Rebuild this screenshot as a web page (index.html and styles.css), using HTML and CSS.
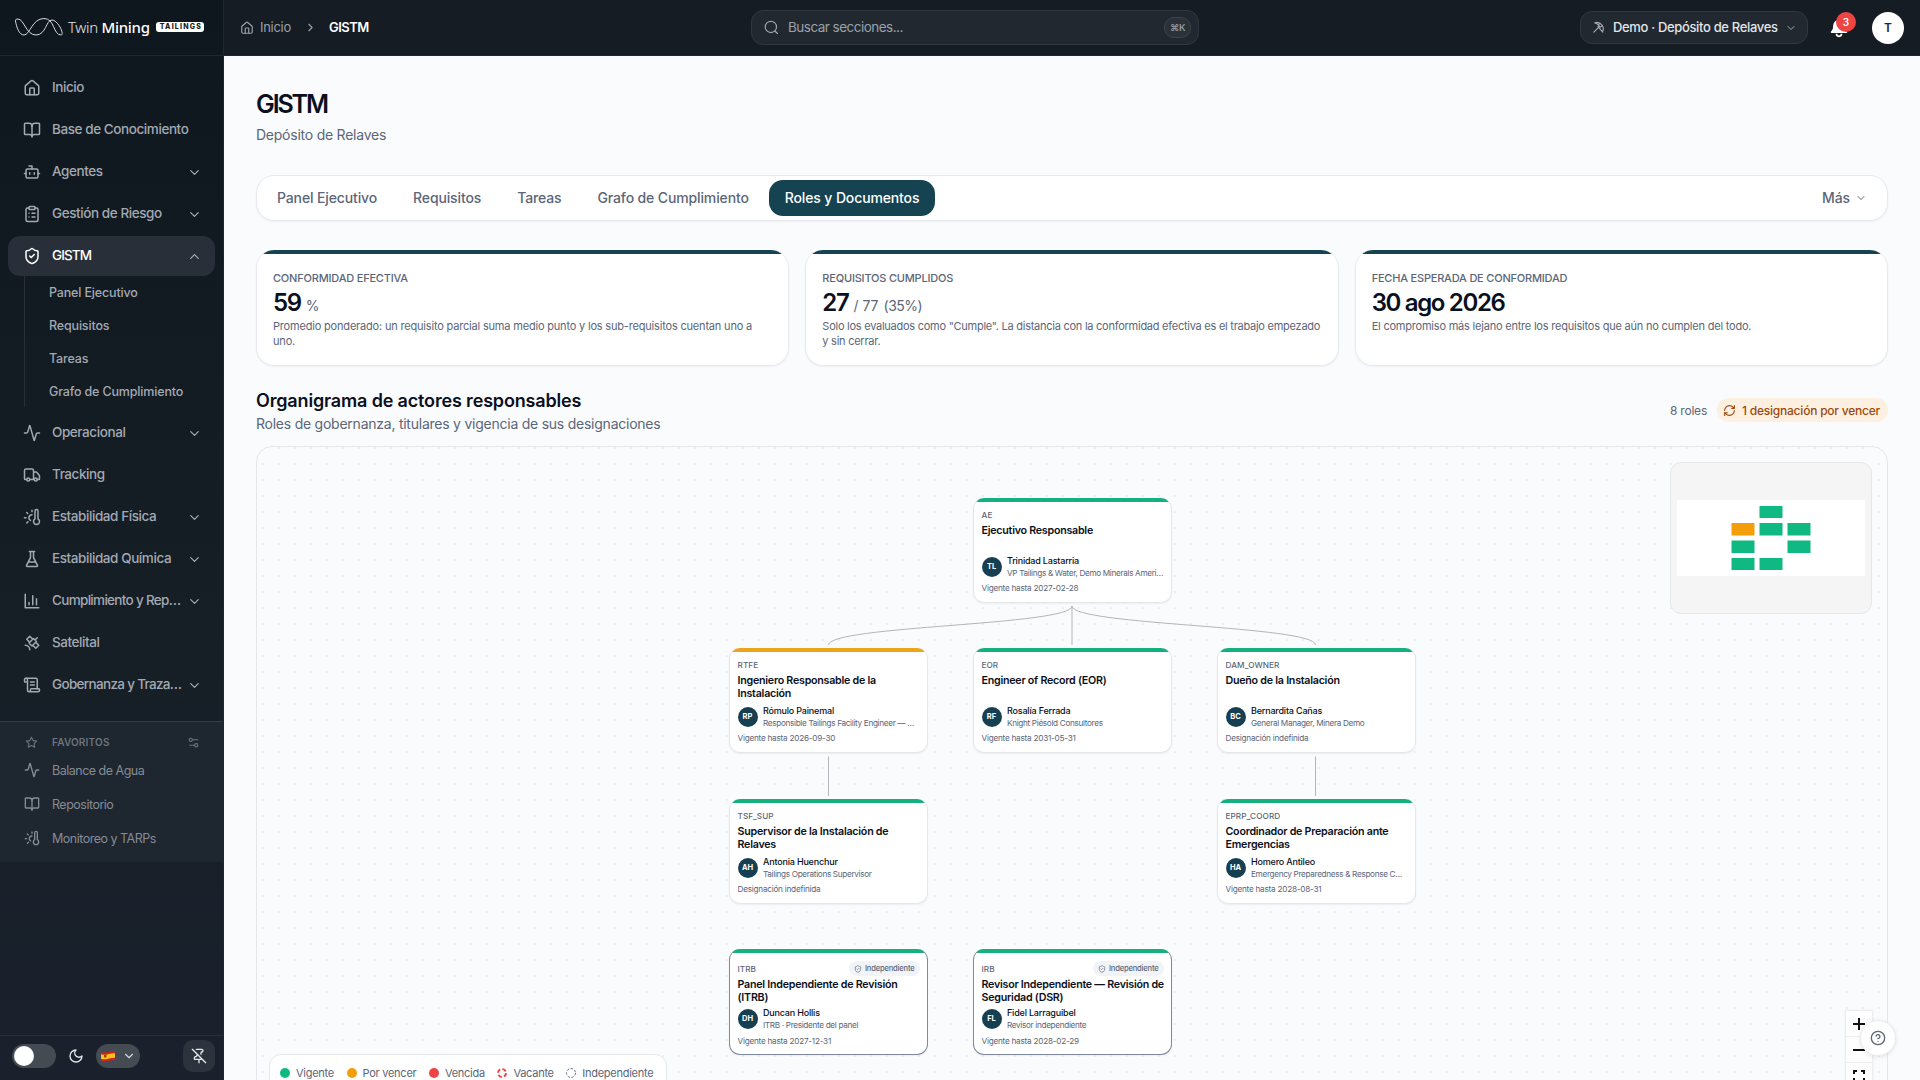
FILE: index.html
```html
<!DOCTYPE html>
<html lang="es">
<head>
<meta charset="utf-8">
<title>GISTM · Twin Mining Tailings</title>
<link rel="stylesheet" href="styles.css">
</head>
<body>
<svg class="sprite" aria-hidden="true">
  <symbol id="house" viewBox="0 0 24 24"><path d="M15 21v-8a1 1 0 0 0-1-1h-4a1 1 0 0 0-1 1v8"/><path d="M3 10a2 2 0 0 1 .709-1.528l7-5.999a2 2 0 0 1 2.582 0l7 5.999A2 2 0 0 1 21 10v9a2 2 0 0 1-2 2H5a2 2 0 0 1-2-2z"/></symbol>
  <symbol id="book" viewBox="0 0 24 24"><path d="M12 7v14"/><path d="M3 18a1 1 0 0 1-1-1V4a1 1 0 0 1 1-1h5a4 4 0 0 1 4 4 4 4 0 0 1 4-4h5a1 1 0 0 1 1 1v13a1 1 0 0 1-1 1h-6a3 3 0 0 0-3 3 3 3 0 0 0-3-3z"/></symbol>
  <symbol id="bot" viewBox="0 0 24 24"><path d="M12 8V4H8"/><rect width="16" height="12" x="4" y="8" rx="2"/><path d="M2 14h2M20 14h2M15 13v2M9 13v2"/></symbol>
  <symbol id="clipboard" viewBox="0 0 24 24"><rect width="8" height="4" x="8" y="2" rx="1"/><path d="M16 4h2a2 2 0 0 1 2 2v14a2 2 0 0 1-2 2H6a2 2 0 0 1-2-2V6a2 2 0 0 1 2-2h2M12 11h4M12 16h4M8 11h.01M8 16h.01"/></symbol>
  <symbol id="shield" viewBox="0 0 24 24"><path d="M20 13c0 5-3.500 7.500-7.660 8.950a1 1 0 0 1-.67-.01C7.500 20.500 4 18 4 13V6a1 1 0 0 1 1-1c2 0 4.500-1.200 6.240-2.720a1.170 1.170 0 0 1 1.520 0C14.510 3.810 17 5 19 5a1 1 0 0 1 1 1z"/><path d="m9 12 2 2 4-4"/></symbol>
  <symbol id="activity" viewBox="0 0 24 24"><path d="M22 12h-2.480a2 2 0 0 0-1.930 1.460l-2.350 8.360a.25.25 0 0 1-.48 0L9.240 2.180a.25.25 0 0 0-.48 0l-2.350 8.360A2 2 0 0 1 4.490 12H2"/></symbol>
  <symbol id="truck" viewBox="0 0 24 24"><path d="M14 18V6a2 2 0 0 0-2-2H4a2 2 0 0 0-2 2v11a1 1 0 0 0 1 1h2M15 18H9M19 18h2a1 1 0 0 0 1-1v-3.650a1 1 0 0 0-.22-.624l-3.480-4.350A1 1 0 0 0 17.520 8H14"/><circle cx="17" cy="18" r="2"/><circle cx="7" cy="18" r="2"/></symbol>
  <symbol id="thermo" viewBox="0 0 24 24"><path d="M12 9a4 4 0 0 0-2 7.500M12 3v2M6.600 18.400l-1.400 1.400M20 4v10.540a4 4 0 1 1-4 0V4a2 2 0 0 1 4 0ZM4 13H2M6.340 7.340 4.930 5.930"/></symbol>
  <symbol id="flask" viewBox="0 0 24 24"><path d="M10 2v7.527a2 2 0 0 1-.211.896L4.720 20.550a1 1 0 0 0 .9 1.450h12.760a1 1 0 0 0 .9-1.450l-5.069-10.127A2 2 0 0 1 14 9.527V2M8.500 2h7M7 16h10"/></symbol>
  <symbol id="chart" viewBox="0 0 24 24"><path d="M3 3v18h18M18 17V9M13 17V5M8 17v-3"/></symbol>
  <symbol id="satellite" viewBox="0 0 24 24"><path d="M13 7 9 3 5 7l4 4M17 11l4 4-4 4-4-4M8 12l4 4 6-6-4-4ZM16 8l3-3M9 21a6 6 0 0 0-6-6"/></symbol>
  <symbol id="scroll" viewBox="0 0 24 24"><path d="M15 12h-5M15 8h-5M19 17V5a2 2 0 0 0-2-2H4"/><path d="M8 21h12a2 2 0 0 0 2-2v-1a1 1 0 0 0-1-1H11a1 1 0 0 0-1 1v1a2 2 0 1 1-4 0V5a2 2 0 1 0-4 0v2a1 1 0 0 0 1 1h3"/></symbol>
  <symbol id="star" viewBox="0 0 24 24"><path d="M12 2.500l2.900 6 6.600.9-4.800 4.600 1.200 6.600L12 17.400l-5.900 3.200 1.200-6.600L2.500 9.400l6.600-.9z"/></symbol>
  <symbol id="sliders" viewBox="0 0 24 24"><path d="M20 7h-9M14 17H5"/><circle cx="17" cy="17" r="3"/><circle cx="7" cy="7" r="3"/></symbol>
  <symbol id="moon" viewBox="0 0 24 24"><path d="M12 3a6 6 0 0 0 9 9 9 9 0 1 1-9-9Z"/></symbol>
  <symbol id="pinoff" viewBox="0 0 24 24"><path d="M12 17v5M15 9.340V7a1 1 0 0 1 1-1 2 2 0 0 0 0-4H7.890M2 2l20 20M9 9v1.760a2 2 0 0 1-1.110 1.790l-1.780.9A2 2 0 0 0 5 15.240V16a1 1 0 0 0 1 1h11"/></symbol>
  <symbol id="pickaxe" viewBox="0 0 24 24"><path d="M13 11 3.500 20.500M11 10.500l9 10M15.700 5.300C12.500 2.500 8.500 2 5 3.500c3 .5 6 2.500 8 5M14.500 4l4.500 4-3.500 3.500-4-4zM18.500 8c2.500 3 3 7 1.500 10.500"/></symbol>
  <symbol id="down" viewBox="0 0 24 24"><path d="m6 9 6 6 6-6"/></symbol>
  <symbol id="up" viewBox="0 0 24 24"><path d="m18 15-6-6-6 6"/></symbol>
  <symbol id="right" viewBox="0 0 24 24"><path d="m9 18 6-6-6-6"/></symbol>
  <symbol id="search" viewBox="0 0 24 24"><circle cx="11" cy="11" r="9"/><path d="m21.500 21.500-4-4"/></symbol>
  <symbol id="refresh" viewBox="0 0 24 24"><path d="M3 12a9 9 0 0 1 9-9 9.750 9.750 0 0 1 6.740 2.740L21 8M21 3v5h-5M21 12a9 9 0 0 1-9 9 9.750 9.750 0 0 1-6.740-2.740L3 16M8 16H3v5"/></symbol>
  <symbol id="help" viewBox="0 0 24 24"><circle cx="12" cy="12" r="10"/><path d="M9.090 9a3 3 0 0 1 5.830 1c0 2-3 3-3 3M12 17h.01"/></symbol>
</svg>

<div class="app">
  <aside class="sidebar">
    <div class="brand">
      <svg class="brand-mark" viewBox="0 0 48 18"><path d="M.5 3C1.500 9 4 17 9 17 15 17 17 .5 29 .5 40 .5 38 17 46 17 50 17 43 2 37 2 31 2 31 17 21 17 11 17 9 1 3 1 1 1 .2 1.800.5 3Z"/></svg>
      <span class="brand-name">Twin <b>Mining</b></span>
      <span class="brand-tag">TAILINGS</span>
    </div>
    <nav class="nav">
      <a class="nav-item"><svg class="icon"><use href="#house"/></svg><span>Inicio</span></a>
      <a class="nav-item"><svg class="icon"><use href="#book"/></svg><span>Base de Conocimiento</span></a>
      <a class="nav-item"><svg class="icon"><use href="#bot"/></svg><span>Agentes</span><svg class="icon caret"><use href="#down"/></svg></a>
      <a class="nav-item"><svg class="icon"><use href="#clipboard"/></svg><span>Gestión de Riesgo</span><svg class="icon caret"><use href="#down"/></svg></a>
      <a class="nav-item active"><svg class="icon"><use href="#shield"/></svg><span>GISTM</span><svg class="icon caret"><use href="#up"/></svg></a>
      <div class="subnav">
        <a><span>Panel Ejecutivo</span></a>
        <a><span>Requisitos</span></a>
        <a><span>Tareas</span></a>
        <a><span>Grafo de Cumplimiento</span></a>
      </div>
      <a class="nav-item"><svg class="icon"><use href="#activity"/></svg><span>Operacional</span><svg class="icon caret"><use href="#down"/></svg></a>
      <a class="nav-item"><svg class="icon"><use href="#truck"/></svg><span>Tracking</span></a>
      <a class="nav-item"><svg class="icon"><use href="#thermo"/></svg><span>Estabilidad Física</span><svg class="icon caret"><use href="#down"/></svg></a>
      <a class="nav-item"><svg class="icon"><use href="#flask"/></svg><span>Estabilidad Química</span><svg class="icon caret"><use href="#down"/></svg></a>
      <a class="nav-item long"><svg class="icon"><use href="#chart"/></svg><span>Cumplimiento y Rep…</span><svg class="icon caret"><use href="#down"/></svg></a>
      <a class="nav-item"><svg class="icon"><use href="#satellite"/></svg><span>Satelital</span></a>
      <a class="nav-item long"><svg class="icon"><use href="#scroll"/></svg><span>Gobernanza y Traza…</span><svg class="icon caret"><use href="#down"/></svg></a>
    </nav>
    <section class="favorites">
      <div class="fav-head"><svg class="icon"><use href="#star"/></svg><span>FAVORITOS</span><svg class="icon fav-settings"><use href="#sliders"/></svg></div>
      <a class="fav-item"><svg class="icon"><use href="#activity"/></svg><span>Balance de Agua</span></a>
      <a class="fav-item"><svg class="icon"><use href="#book"/></svg><span>Repositorio</span></a>
      <a class="fav-item"><svg class="icon"><use href="#thermo"/></svg><span>Monitoreo y TARPs</span></a>
    </section>
    <footer class="side-foot">
      <div class="switch"></div>
      <svg class="icon moon"><use href="#moon"/></svg>
      <div class="lang">
        <svg class="flag" viewBox="0 0 16 12"><path fill="#c8241c" d="M1 2q4 1 7 0t7-1v9q-3 0-7 1t-7 0z"/><path fill="#fcc21b" d="M1 4.200q4 1 7 0t7-1v4.600q-3 0-7 1t-7 0z"/><path fill="#a3401c" d="M4 5h2.500v2.500H4z"/></svg>
        <svg class="icon"><use href="#down"/></svg>
      </div>
      <div class="pin"><svg class="icon"><use href="#pinoff"/></svg></div>
    </footer>
  </aside>

  <div class="content">
    <header class="topbar">
      <div class="crumbs">
        <svg class="icon crumb-home"><use href="#house"/></svg><span>Inicio</span>
        <svg class="icon crumb-sep"><use href="#right"/></svg>
        <strong>GISTM</strong>
      </div>
      <div class="search"><svg class="icon"><use href="#search"/></svg><span>Buscar secciones...</span><kbd>⌘K</kbd></div>
      <div class="actions">
        <div class="site"><svg class="icon"><use href="#pickaxe"/></svg><span>Demo · Depósito de Relaves</span><svg class="icon site-caret"><use href="#down"/></svg></div>
        <div class="bell"><svg viewBox="0 0 24 24"><path d="M12 2a7 7 0 0 0-7 7c0 4.500-1.500 6-2.600 7.300A1 1 0 0 0 3.200 18h17.600a1 1 0 0 0 .8-1.700C20.500 15 19 13.500 19 9a7 7 0 0 0-7-7Z"/><path d="M9 19a3 3 0 0 0 6 0" class="clapper"/></svg><span class="bell-count">3</span></div>
        <div class="avatar">T</div>
      </div>
    </header>

    <main class="page">
      <h1>GISTM</h1>
      <p class="subtitle"><span>Depósito de Relaves</span></p>

      <nav class="tabs">
        <a><span>Panel Ejecutivo</span></a><a><span>Requisitos</span></a><a><span>Tareas</span></a><a><span>Grafo de Cumplimiento</span></a><a class="current"><span>Roles y Documentos</span></a>
        <a class="more"><span>Más</span><svg class="icon"><use href="#down"/></svg></a>
      </nav>

      <section class="kpis">
        <article class="kpi">
          <h3><span>CONFORMIDAD EFECTIVA</span></h3>
          <div class="kpi-value"><b>59</b> <small>%</small></div>
          <p class="loose">Promedio ponderado: un requisito parcial suma medio punto y los sub-requisitos cuentan uno a<br>uno.</p>
        </article>
        <article class="kpi">
          <h3><span>REQUISITOS CUMPLIDOS</span></h3>
          <div class="kpi-value"><b>27</b> <small class="ratio">/ 77</small> <small>(35%)</small></div>
          <p class="tight">Solo los evaluados como "Cumple". La distancia con la conformidad efectiva es el trabajo empezado<br>y sin cerrar.</p>
        </article>
        <article class="kpi">
          <h3><span>FECHA ESPERADA DE CONFORMIDAD</span></h3>
          <div class="kpi-value"><b>30 ago 2026</b></div>
          <p>El compromiso más lejano entre los requisitos que aún no cumplen del todo.</p>
        </article>
      </section>

      <section class="chart-head">
        <div>
          <h2><span>Organigrama de actores responsables</span></h2>
          <p><span>Roles de gobernanza, titulares y vigencia de sus designaciones</span></p>
        </div>
        <div class="chart-meta"><span class="count">8 roles</span><div class="warn"><svg class="icon"><use href="#refresh"/></svg><span>1 designación por vencer</span></div></div>
      </section>

      <section class="canvas">
        <svg class="edges" width="1630" height="640">
          <path d="M815 159C815 178.500 571.500 178.500 571.500 198M815 159V198M815 159C815 178.500 1058.500 178.500 1058.500 198M571.500 309.500V349M1058.500 309.500V349"/>
        </svg>

        <article class="node" style="left:716px;top:51px">
          <div class="code"><span>AE</span></div><h4><span>Ejecutivo Responsable</span></h4>
          <div class="person"><i>TL</i><div><b>Trinidad Lastarria</b><em>VP Tailings &amp; Water, Demo Minerals Ameri…</em></div></div>
          <div class="term"><span>Vigente hasta 2027-02-28</span></div>
        </article>
        <article class="node due" style="left:472px;top:201px">
          <div class="code"><span>RTFE</span></div><h4><span>Ingeniero Responsable de la<br>Instalación</span></h4>
          <div class="person"><i>RP</i><div><b>Rómulo Painemal</b><em>Responsible Tailings Facility Engineer — …</em></div></div>
          <div class="term"><span>Vigente hasta 2026-09-30</span></div>
        </article>
        <article class="node" style="left:716px;top:201px">
          <div class="code"><span>EOR</span></div><h4><span>Engineer of Record (EOR)</span></h4>
          <div class="person"><i>RF</i><div><b>Rosalía Ferrada</b><em>Knight Piésold Consultores</em></div></div>
          <div class="term"><span>Vigente hasta 2031-05-31</span></div>
        </article>
        <article class="node" style="left:960px;top:201px">
          <div class="code"><span>DAM_OWNER</span></div><h4><span>Dueño de la Instalación</span></h4>
          <div class="person"><i>BC</i><div><b>Bernardita Cañas</b><em>General Manager, Minera Demo</em></div></div>
          <div class="term"><span>Designación indefinida</span></div>
        </article>
        <article class="node" style="left:472px;top:352px">
          <div class="code"><span>TSF_SUP</span></div><h4><span>Supervisor de la Instalación de<br>Relaves</span></h4>
          <div class="person"><i>AH</i><div><b>Antonia Huenchur</b><em>Tailings Operations Supervisor</em></div></div>
          <div class="term"><span>Designación indefinida</span></div>
        </article>
        <article class="node" style="left:960px;top:352px">
          <div class="code"><span>EPRP_COORD</span></div><h4><span>Coordinador de Preparación ante<br>Emergencias</span></h4>
          <div class="person"><i>HA</i><div><b>Homero Antileo</b><em>Emergency Preparedness &amp; Response C…</em></div></div>
          <div class="term"><span>Vigente hasta 2028-08-31</span></div>
        </article>
        <article class="node indep" style="left:472px;top:502px">
          <div class="code"><span>ITRB</span><div class="badge"><svg class="icon"><use href="#shield"/></svg><span>Independiente</span></div></div><h4><span>Panel Independiente de Revisión<br>(ITRB)</span></h4>
          <div class="person"><i>DH</i><div><b>Duncan Hollis</b><em>ITRB · Presidente del panel</em></div></div>
          <div class="term"><span>Vigente hasta 2027-12-31</span></div>
        </article>
        <article class="node indep" style="left:716px;top:502px">
          <div class="code"><span>IRB</span><div class="badge"><svg class="icon"><use href="#shield"/></svg><span>Independiente</span></div></div><h4><span>Revisor Independiente — Revisión de<br>Seguridad (DSR)</span></h4>
          <div class="person"><i>FL</i><div><b>Fidel Larraguibel</b><em>Revisor independiente</em></div></div>
          <div class="term"><span>Vigente hasta 2028-02-29</span></div>
        </article>

        <div class="minimap">
          <svg viewBox="0 0 200 150"><path fill="#fff" d="M6 37h188v76H6z"/><path fill="#f59e0b" d="M60.500 60h23v12.500h-23z"/><path fill="#10b981" d="M88.500 43h23v12h-23zM88.500 60h23v12.500h-23zM116.500 60h23v12.500h-23zM60.500 77.500h23V90h-23zM116.500 77.500h23V90h-23zM60.500 95h23v12h-23zM88.500 95h23v12h-23z"/></svg>
        </div>
        <div class="legend">
          <div><i class="dot ok"></i><span>Vigente</span></div>
          <div><i class="dot soon"></i><span>Por vencer</span></div>
          <div><i class="dot late"></i><span>Vencida</span></div>
          <div><svg class="ring vacant" viewBox="0 0 10 10"><circle cx="5" cy="5" r="4"/></svg><span>Vacante</span></div>
          <div><svg class="ring free" viewBox="0 0 10 10"><circle cx="5" cy="5" r="4.500"/></svg><span>Independiente</span></div>
        </div>
        <div class="zoomer">
          <button><svg viewBox="0 0 12 12"><path d="M6 0v12M0 6h12"/></svg></button>
          <button><svg viewBox="0 0 12 12"><path d="M0 6h12"/></svg></button>
          <button><svg viewBox="0 0 12 12"><path d="M1 4V1h3M8 1h3v3M1 8v3h3M8 11h3V8"/></svg></button>
        </div>
      </section>
    </main>
  </div>
  <div class="help"><svg class="icon"><use href="#help"/></svg></div>
</div>
</body>
</html>
```
FILE: styles.css
```css
* { box-sizing: border-box; margin: 0; padding: 0; }
body { font-family: Inter, "Noto Sans", sans-serif; background: #fafbfd; color: #0b1020; font-size: 14px; }
.sprite { position: absolute; width: 0; height: 0; }
.icon { fill: none; stroke: currentColor; stroke-width: 2; stroke-linecap: round; stroke-linejoin: round; flex: none; }
.app { display: flex; height: 1080px; width: 1920px; overflow: hidden; }
span, b, em, strong { white-space: nowrap; }

.sidebar { width: 224px; flex: none; display: flex; flex-direction: column; background: linear-gradient(#0f171e, #161e26 60%, #1a212d); color: #a3a9b2; border-right: 1px solid #20262d; }
.brand { height: 56px; flex: none; display: flex; align-items: center; padding: 0 0 2px 15px; border-bottom: 1px solid #20272f; }
.brand-mark { width: 48px; height: 18px; fill: none; stroke: #d5d9dd; stroke-width: 1; overflow: visible; flex: none; }
.brand-name { margin-left: 5px; color: #e4e7ea; font: 300 15px "Noto Sans", sans-serif; letter-spacing: -.3px; }
.brand-name b { font-weight: 500; color: #fff; }
.brand-tag { margin-left: 6px; background: #fff; color: #141b22; border-radius: 3px; height: 10px; line-height: 10px; padding: 0 2px 0 4px; font-size: 7px; font-weight: 800; letter-spacing: 1.200px; }

.nav { padding: 12px 8px 16px 8px; display: flex; flex-direction: column; gap: 2px; }
.nav-item { height: 40px; display: flex; align-items: center; padding: 0 13px 0 15px; border-radius: 12px; font-size: 13.500px; font-weight: 500; gap: 11px; letter-spacing: -.42px; }
.nav-item span { margin-top: -2px; }
.nav-item.long { letter-spacing: -.68px; }
.nav-item.long span { width: 124px; }
.nav-item .icon { width: 18px; height: 18px; }
.nav-item .caret { width: 15px; height: 15px; margin-left: auto; }
.nav-item.active { background: #292f38; color: #fff; letter-spacing: -.9px; }
.nav-item.active .caret { color: #a3a9b2; }
.subnav { margin: -2px 0 4px 16px; border-left: 1px solid #272e36; padding-left: 24px; display: grid; gap: 1px; }
.subnav a { height: 32px; display: flex; align-items: center; font-size: 12.500px; font-weight: 500; letter-spacing: -.16px; }

.favorites { border-top: 1px solid #323a43; background: #1e262f; height: 141px; padding: 10px 14px 0 24px; color: #858c95; }
.fav-head, .fav-item { display: flex; align-items: center; height: 34px; font-size: 12.500px; gap: 12px; letter-spacing: -.5px; }
.fav-head { height: 21px; font-size: 10px; font-weight: 600; letter-spacing: .2px; color: #6d747e; }
.fav-head span { margin-top: -1px; }
.fav-head .icon { width: 13px; height: 13px; margin: 0 2px 0 1px; }
.fav-head .fav-settings { margin-left: auto; margin-right: 9px; }
.fav-item .icon { width: 16px; height: 16px; }

.side-foot { margin-top: auto; height: 45px; flex: none; border-top: 1px solid #2a313a; display: flex; align-items: center; padding: 0 8px 4px 12px; }
.switch { width: 44px; height: 24px; border-radius: 12px; background: #444b53; padding: 2px; }
.switch::before { content: ""; display: block; width: 20px; height: 20px; border-radius: 50%; background: #fff; }
.moon { width: 16px; height: 16px; margin-left: 12px; color: #e5e7eb; }
.lang { width: 44px; height: 24px; margin-left: 12px; border-radius: 12px; background: #444b53; display: flex; align-items: center; padding-left: 4px; gap: 6px; color: #d1d5db; }
.flag { width: 16px; height: 12px; }
.lang .icon { width: 14px; height: 14px; }
.pin { margin-left: auto; width: 32px; height: 32px; border-radius: 10px; background: #2c333c; display: grid; place-items: center; color: #e5e7eb; }
.pin .icon { width: 16px; height: 16px; }

.content { flex: 1; min-width: 0; display: flex; flex-direction: column; }
.topbar { height: 56px; flex: none; background: #151c23; border-bottom: 1px solid #20262d; display: grid; grid-template-columns: 511px 448px 1fr; padding: 0 16px; align-items: center; color: #9aa1ab; }
.crumbs { display: flex; align-items: center; font-size: 13px; height: 55px; letter-spacing: -.3px; }
.crumbs span, .crumbs strong { margin-top: -1px; }
.crumb-home { width: 14px; height: 14px; margin-right: 6px; }
.crumb-sep { width: 13px; height: 13px; margin: 0 12px 0 13px; }
.crumbs strong { color: #fff; font-weight: 600; letter-spacing: -.5px; }
.search { height: 35px; border: 1px solid #30373e; border-radius: 12px; background: #21282f; display: flex; align-items: center; padding: 0 7px 0 12px; font-size: 13.500px; gap: 9px; letter-spacing: -.52px; }
.search .icon { width: 15px; height: 15px; }
.search span { margin-top: -1px; }
kbd { margin-left: auto; width: 27px; height: 21px; border: 1px solid #3c434a; border-radius: 10px; background: #2a3138; font: 500 9.500px Inter, sans-serif; line-height: 19px; text-align: center; }
.actions { display: flex; justify-content: flex-end; align-items: center; }
.site { width: 228px; height: 33px; border: 1px solid #30373e; border-radius: 12px; background: #21282f; display: flex; align-items: center; padding: 0 11px; gap: 7px; color: #e1e4e8; font-size: 13px; font-weight: 500; letter-spacing: -.34px; }
.site span { margin: -1px 0 0 1px; }
.site .icon { width: 13px; height: 13px; color: #a8aeb6; }
.site .site-caret { width: 12px; height: 12px; margin-left: auto; }
.bell { position: relative; width: 20px; height: 20px; margin: 0 23px 0 21px; }
.bell svg { width: 20px; height: 20px; fill: #fff; }
.clapper { fill: none; stroke: #fff; stroke-width: 2; }
.bell-count { position: absolute; left: 7px; top: -6px; width: 20px; height: 20px; border-radius: 50%; background: #ef4444; color: #fff; font-size: 10px; font-weight: 600; line-height: 20px; text-align: center; }
.avatar { width: 32px; height: 32px; border-radius: 50%; background: #fff; color: #1f2937; font-size: 12px; font-weight: 600; line-height: 32px; text-align: center; }

.page { flex: 1; min-height: 0; padding: 32px 32px 0; overflow: hidden; display: flex; flex-direction: column; }
h1 { font-size: 25px; line-height: 32px; font-weight: 600; letter-spacing: -2.100px; }
.subtitle { margin-top: 5px; line-height: 20px; color: #5b6678; letter-spacing: -.24px; }
.tabs { margin-top: 30px; height: 46px; flex: none; background: #fff; border: 1px solid #e6e9ee; border-radius: 18px; box-shadow: 0 1px 2px rgba(15, 23, 42, .05); padding: 4px; display: flex; gap: 4px; color: #5b6678; font-weight: 500; letter-spacing: -.13px; }
.tabs a { height: 36px; border-radius: 14px; padding: 0 16px 1px; display: flex; align-items: center; }
.tabs .current { background: #164352; color: #fff; }
.tabs .more { margin-left: auto; gap: 5px; }
.more .icon { width: 12px; height: 12px; }

.kpis { margin-top: 29px; display: grid; grid-template-columns: repeat(3, minmax(0, 1fr)); gap: 16px; flex: none; }
.kpi { height: 116px; background: linear-gradient(#164352 0 4px, #fff 4px); border: 1px solid #e6e9ee; border-top: 0; border-radius: 18px; box-shadow: 0 1px 2px rgba(15, 23, 42, .05); padding: 20px 16px 0; color: #5b6678; }
.kpi h3 { font-size: 11px; font-weight: 500; line-height: 16px; letter-spacing: -.2px; }
.kpi-value { height: 32px; line-height: 34px; display: flex; align-items: baseline; gap: 5px; }
.kpi-value b { font-size: 24px; font-weight: 600; color: #0b1020; letter-spacing: -1.350px; }
.kpi-value small { font-size: 14px; letter-spacing: -.5px; }
.kpi-value .ratio { letter-spacing: 0; }
.kpi p { font-size: 11px; line-height: 15px; margin-top: 1px; white-space: nowrap; letter-spacing: -.21px; }
.kpi .loose { letter-spacing: -.185px; }
.kpi .tight { letter-spacing: -.255px; }

.chart-head { margin-top: 21px; display: flex; justify-content: space-between; flex: none; height: 59px; }
.chart-head h2 { font-size: 18px; line-height: 28px; font-weight: 600; letter-spacing: -.16px; }
.chart-head p { line-height: 20px; margin-top: -1px; color: #5b6678; letter-spacing: -.24px; }
.chart-meta { display: flex; align-items: center; height: 24px; margin-top: 11px; font-size: 12px; color: #5b6678; gap: 10px; letter-spacing: -.22px; }
.warn { height: 24px; border-radius: 12px; background: #fdf0e0; color: #9a4a10; display: flex; align-items: center; gap: 6px; padding: 0 8px 0 6px; font-weight: 500; }
.warn .icon { width: 13px; height: 13px; }

.canvas { flex: none; position: relative; height: 700px; border: 1px solid #e4e7ec; border-radius: 16px; background: radial-gradient(circle, #eceff4 1px, transparent 1.200px) -2px 9px / 16px 16px; }
.edges { position: absolute; inset: 0; fill: none; stroke: #b1b5bb; stroke-width: 1; }
.node { position: absolute; width: 199px; height: 105px; background: linear-gradient(#14b07e 0 4px, #fff 4px); border: 1px solid #e4e7ec; border-top: 0; border-radius: 11px; box-shadow: 0 1px 2px rgba(15, 23, 42, .06); padding: 12px 7.500px 0; color: #5b6678; }
.node.due { background: linear-gradient(#eda41a 0 4px, #fff 4px); }
.node.indep { border-color: #8089a0; height: 106px; }
.code { height: 10px; display: flex; align-items: center; justify-content: space-between; font-size: 8.200px; font-weight: 500; letter-spacing: .08px; }
.indep .code { height: 15px; }
.badge { height: 15px; border-radius: 8px; background: #f1f3f7; display: flex; align-items: center; gap: 3px; padding: 0 5px; font-size: 7.600px; letter-spacing: -.2px; }
.badge .icon { width: 8px; height: 8px; }
.node h4 { height: 26px; margin-top: 5px; font-size: 10.700px; line-height: 12.700px; font-weight: 600; color: #0b1020; letter-spacing: -.25px; }
.node.indep h4 { margin-top: 3px; }
.person { height: 24px; margin-top: 4px; display: flex; align-items: center; gap: 5.500px; }
.indep .person { margin-top: 2px; }
.person i { width: 20px; height: 20px; border-radius: 50%; background: #164052; color: #fff; font: 700 7.500px/20px Inter, sans-serif; text-align: center; flex: none; }
.person b, .person em { display: table; font-style: normal; line-height: 12px; }
.person b { font-size: 9px; font-weight: 500; color: #0b1020; letter-spacing: -.19px; }
.person em { font-size: 8.200px; letter-spacing: -.33px; }
.term { margin-top: 4px; height: 10px; line-height: 10px; font-size: 8.200px; letter-spacing: -.24px; }
.indep .term { margin-top: 5px; }

.minimap { position: absolute; left: 1413px; top: 15px; width: 202px; height: 152px; border: 1px solid #e4e7ec; border-radius: 11px; background: #f5f5f5; }
.minimap svg { display: block; width: 200px; height: 150px; }
.legend { position: absolute; left: 12px; top: 607px; width: 398px; height: 40px; border: 1px solid #e4e7ec; border-radius: 12px; background: #fff; padding: 10px 10px; display: flex; gap: 12.500px; font-size: 11px; line-height: 16px; color: #5b6678; letter-spacing: -.26px; }
.legend div { display: flex; align-items: center; gap: 6px; height: 16px; }
.dot { width: 10px; height: 10px; border-radius: 50%; }
.ok { background: #10b981; }
.soon { background: #f59e0b; }
.late { background: #ef4444; }
.ring { width: 10px; height: 10px; fill: none; overflow: visible; }
.vacant { stroke: #ef4444; stroke-width: 2; stroke-dasharray: 4 2.280; }
.free { stroke: #64748b; stroke-width: 1; stroke-dasharray: 2.500 1.540; }
.zoomer { position: absolute; left: 1589px; top: 564px; width: 26px; box-shadow: 0 0 2px 1px rgba(0, 0, 0, .08); }
.zoomer button { width: 26px; height: 26px; display: grid; place-items: center; background: #fefefe; border: 0; border-bottom: 1px solid #eee; }
.zoomer svg { width: 12px; height: 12px; fill: none; stroke: #111; stroke-width: 2; }
.help { position: fixed; left: 1860px; top: 1020px; width: 36px; height: 36px; border-radius: 50%; background: #fff; border: 1px solid #e9ebef; box-shadow: 0 1px 4px rgba(15, 23, 42, .1); display: grid; place-items: center; color: #5b6678; }
.help .icon { width: 16px; height: 16px; }
```
